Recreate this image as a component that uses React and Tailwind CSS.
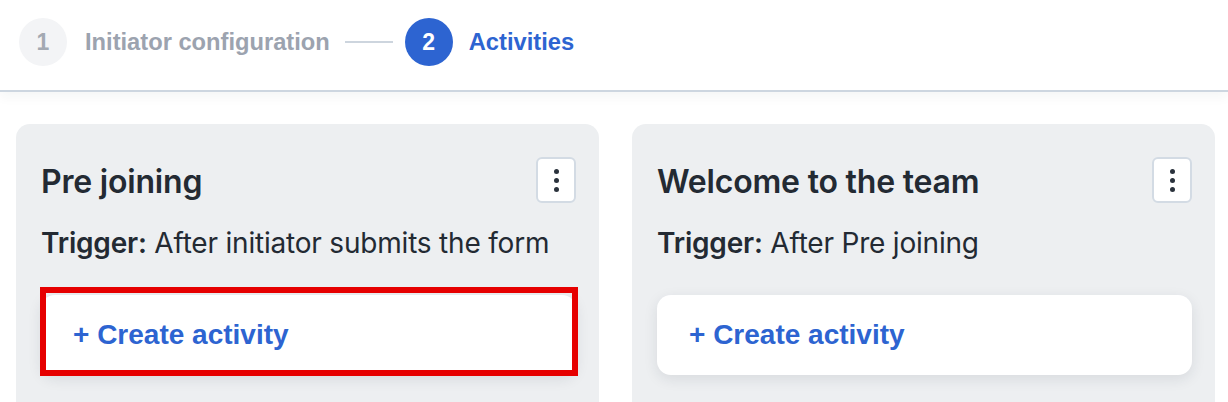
const sans = { fontFamily: '"Liberation Sans", Arial, sans-serif' };

function Kebab() {
  return (
    <button className="flex h-[46px] w-[40px] shrink-0 flex-col items-center justify-center gap-[4px] rounded-md border-2 border-[#d3dbe4] bg-white">
      <span className="h-[5px] w-[5px] rounded-full bg-[#2a323c]" />
      <span className="h-[5px] w-[5px] rounded-full bg-[#2a323c]" />
      <span className="h-[5px] w-[5px] rounded-full bg-[#2a323c]" />
    </button>
  );
}

function StageCard({ title, trigger, highlighted }) {
  return (
    <div className="h-[300px] rounded-[14px] bg-[#edeff1] pl-[25px] pr-[23px] pt-[33px]">
      <div className="flex h-[46px] items-center justify-between">
        <h2 className="mt-[4px] text-[32px] font-semibold leading-[38px] tracking-[-0.2px] text-[#232a33]">{title}</h2>
        <Kebab />
      </div>
      <p className="mt-[23px] text-[28px] leading-[34px] tracking-[-0.2px] text-[#232a33]">
        <span className="font-semibold">Trigger:</span> {trigger}
      </p>
      <div className="relative mt-[35px]">
        <div className="flex h-[80px] items-center rounded-[14px] bg-white px-8 shadow-[0_4px_14px_rgba(30,41,59,0.10)]">
          <span style={sans} className="text-[28px] font-bold text-[#2d64d1]">+ Create activity</span>
        </div>
        {highlighted && (
          <div className="absolute -left-[1px] -right-[2px] -top-[8px] -bottom-[1px] border-[6px] border-[#e60000]" />
        )}
      </div>
    </div>
  );
}

export default function App() {
  return (
    <div className="h-[402px] overflow-hidden bg-white" style={{ fontFamily: 'Inter, "Noto Sans", sans-serif' }}>
      <header style={sans} className="flex h-[92px] items-start border-b-2 border-[#cdd6e0] pl-[19px] pt-[18px] shadow-[0_6px_10px_rgba(30,41,59,0.04)]">
        <div className="flex h-[48px] w-[48px] items-center justify-center rounded-full bg-[#f3f4f6] text-[23px] font-bold text-[#a3a9b2]">1</div>
        <span className="ml-[18px] text-[23.7px] font-bold leading-[48px] text-[#9ca3af]">Initiator configuration</span>
        <div className="ml-[15px] mt-[23px] h-[2px] w-[48px] bg-[#cdd5de]" />
        <div className="ml-[12px] flex h-[48px] w-[48px] items-center justify-center rounded-full bg-[#2d64d1] text-[23px] font-bold text-white">2</div>
        <span className="ml-[16px] text-[23.7px] font-bold leading-[48px] text-[#2d64d1]">Activities</span>
      </header>
      <main className="grid grid-cols-2 gap-[33px] pl-4 pr-[13px] pt-[32px]">
        <StageCard title="Pre joining" trigger="After initiator submits the form" highlighted />
        <StageCard title="Welcome to the team" trigger="After Pre joining" />
      </main>
    </div>
  );
}
